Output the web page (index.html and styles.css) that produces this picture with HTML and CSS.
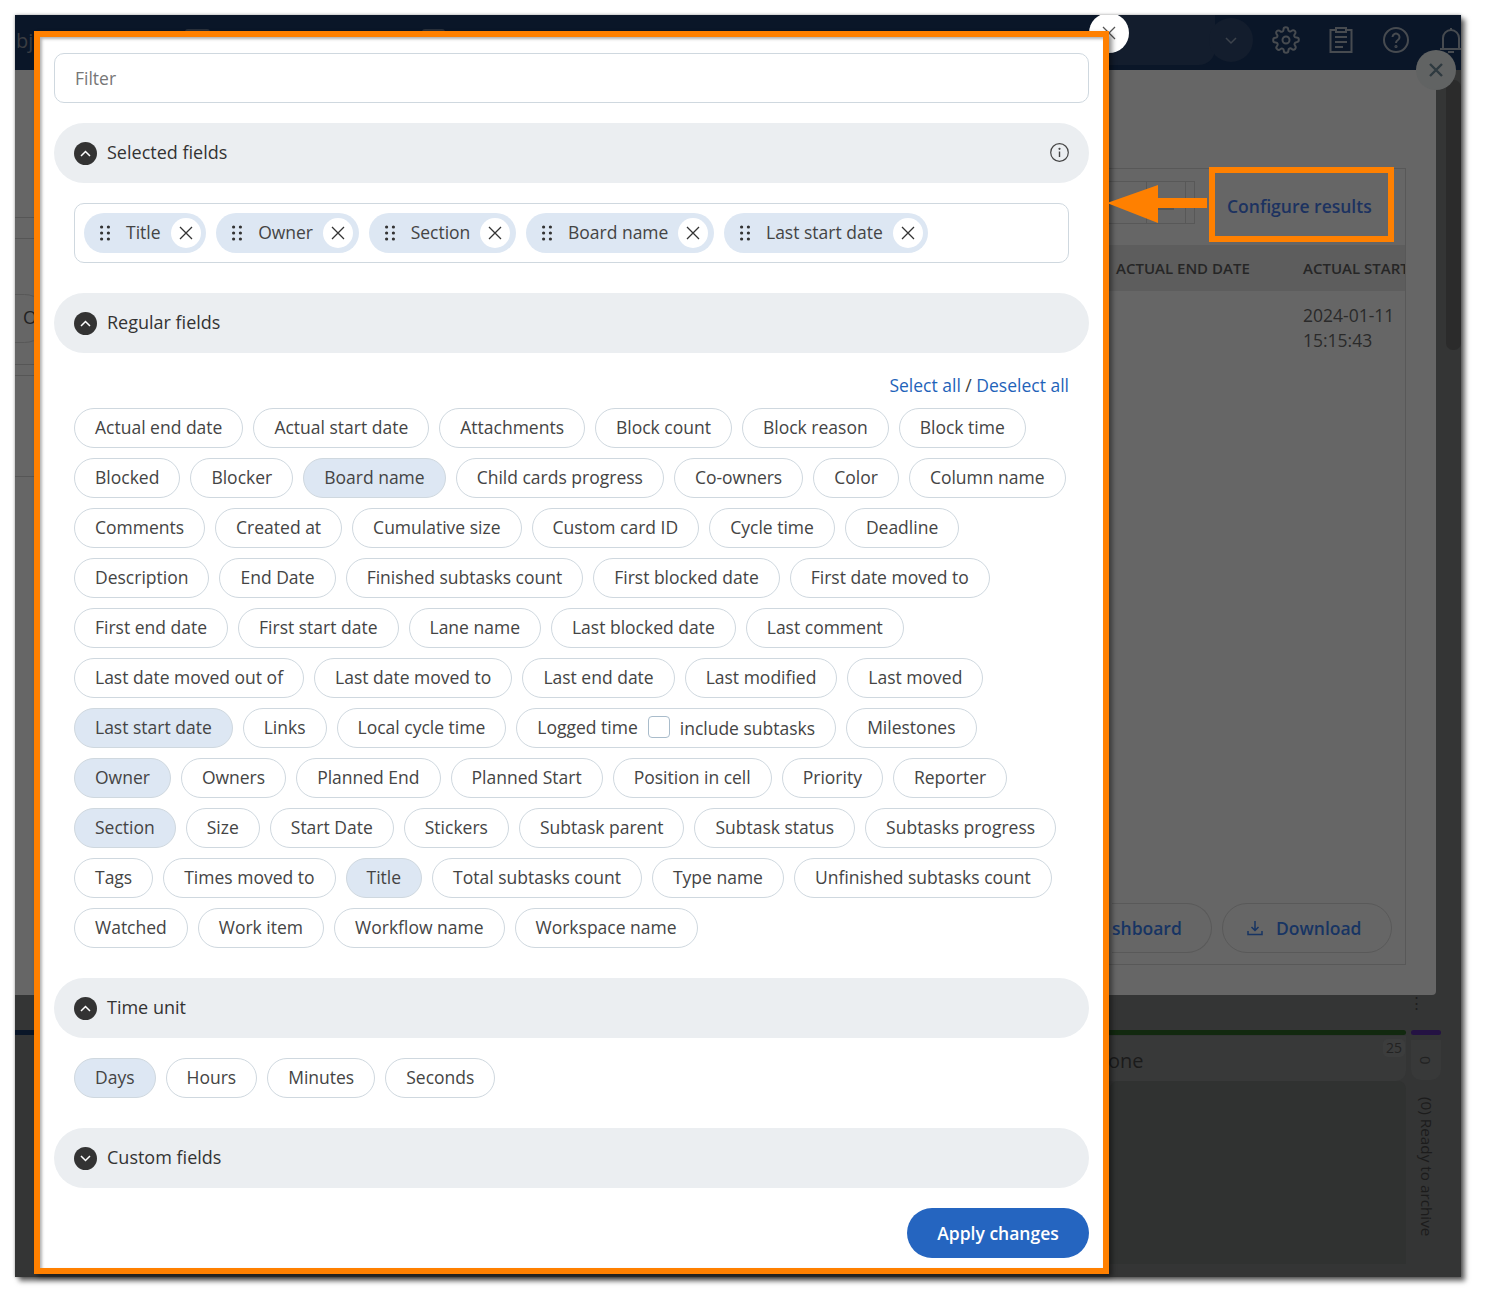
FILE: index.html
```html
<!DOCTYPE html>
<html lang="en">
<head>
<meta charset="utf-8">
<title>Configure results</title>
<link rel="stylesheet" href="styles.css">
</head>
<body>
<div class="screen">
  <div class="topbar">
    <span class="brand">bj</span>
    <span class="tab-lump lump-a"></span>
    <span class="tab-lump lump-b"></span>
    <span class="top-fade"></span>
    <span class="user-chip"><svg width="16" height="16" viewBox="0 0 16 16"><path d="M3 6l5 5 5-5" fill="none" stroke="#3d434c" stroke-width="1.5"/></svg></span>
    <svg class="top-icon gear" width="28" height="28" viewBox="0 0 24 24" fill="none" stroke="#474b50" stroke-width="1.7"><circle cx="12" cy="12" r="3"/><path d="M19.4 15a1.65 1.65 0 0 0 .33 1.82l.06.06a2 2 0 1 1-2.83 2.83l-.06-.06a1.65 1.65 0 0 0-2.82 1.17V21a2 2 0 1 1-4 0v-.09a1.65 1.65 0 0 0-2.82-1.12l-.06.06a2 2 0 1 1-2.83-2.83l.06-.06a1.65 1.65 0 0 0-1.17-2.82H3a2 2 0 1 1 0-4h.09a1.65 1.65 0 0 0 1.12-2.82l-.06-.06a2 2 0 1 1 2.83-2.83l.06.06a1.65 1.65 0 0 0 2.82-1.17V3a2 2 0 1 1 4 0v.09a1.65 1.65 0 0 0 2.82 1.12l.06-.06a2 2 0 1 1 2.83 2.83l-.06.06a1.65 1.65 0 0 0 1.17 2.82H21a2 2 0 1 1 0 4h-.09a1.65 1.65 0 0 0-1.51 1z"/></svg>
    <svg class="top-icon clip" width="26" height="28" viewBox="0 0 26 28" fill="none" stroke="#474b50" stroke-width="2"><path d="M8 4H2.5v22h21V4H18"/><path d="M8 2h10v4H8z"/><path d="M7 11h12M7 16h12M7 21h8"/></svg>
    <svg class="top-icon help" width="26" height="26" viewBox="0 0 26 26" fill="none" stroke="#474b50" stroke-width="2"><circle cx="13" cy="13" r="12"/><path d="M9.5 10a3.5 3.5 0 1 1 5.4 3c-1.2.8-1.9 1.400-1.900 3"/><circle cx="13" cy="19.500" r=".6"/></svg>
    <svg class="top-icon bell" width="24" height="28" viewBox="0 0 24 28" fill="none" stroke="#474b50" stroke-width="2"><path d="M4 21V11a8 8 0 0 1 16 0v10"/><path d="M1 22h22"/><path d="M12 3V1M9 25h6"/></svg>
  </div>

  <div class="panel">
    <div class="left-rule rule-1"></div>
    <div class="left-rule rule-2"></div>
    <div class="left-rule rule-3"></div>
    <div class="left-rule rule-4"></div>
    <div class="left-rule rule-5"></div>
    <div class="left-pill">O</div>
    <div class="results">
      <div class="pager"><span></span><span></span><i></i></div>
      <div class="configure">Configure results</div>
      <div class="thead"><span class="th-end">ACTUAL END DATE</span><span class="th-start">ACTUAL START</span></div>
      <div class="cell-date">2024-01-11<br>15:15:43</div>
      <div class="btn-download"><svg width="16" height="16" viewBox="0 0 16 16" fill="none" stroke="#173463" stroke-width="1.500"><path d="M8 1v9M4.500 7L8 10.500 11.500 7M1 11v3.500h14V11"/></svg>Download</div>
    </div>
    <div class="btn-dash"><span>shboard</span></div>
  </div>
  <div class="scroll-track"><span class="scroll-thumb"></span></div>
  <div class="close-outer"><svg width="16" height="16" viewBox="0 0 16 16"><path d="M2 2l12 12M14 2L2 14" stroke="#2f3a40" stroke-width="2.400"/></svg></div>

  <div class="board">
    <span class="kebab">⋮</span>
    <span class="bar-navy"></span>
    <span class="bar-green"></span>
    <span class="bar-purple"></span>
    <div class="col-head"><span class="col-name">one</span><span class="col-count">25</span></div>
    <div class="col-body"></div>
    <div class="mini-head">0</div>
    <div class="mini-body">(0) Ready to archive</div>
  </div>

  <div class="close-modal"><svg width="14" height="14" viewBox="0 0 14 14"><path d="M1 1l12 12M13 1L1 13" stroke="#555" stroke-width="1.300"/></svg></div>

  <div class="modal">
    <div class="filter">Filter</div>

    <div class="sec-head"><span class="chev"><svg width="11" height="7" viewBox="0 0 11 7"><path d="M1 6l4.500-4.500L10 6" fill="none" stroke="#fff" stroke-width="1.500"/></svg></span><span class="sec-title">Selected fields</span>
      <svg class="info" width="19" height="19" viewBox="0 0 19 19" fill="none" stroke="#444" stroke-width="1.200"><circle cx="9.500" cy="9.500" r="8.800"/><path d="M9.500 8.500v5.500" stroke-width="1.400"/><circle cx="9.500" cy="5.800" r=".5"/></svg>
    </div>
    <div class="selected-box">
      <div class="sel-chip"><svg class="dots" width="10" height="16" viewBox="0 0 10 16" fill="#333"><circle cx="1.600" cy="2" r="1.600"/><circle cx="8.400" cy="2" r="1.600"/><circle cx="1.600" cy="8" r="1.600"/><circle cx="8.400" cy="8" r="1.600"/><circle cx="1.600" cy="14" r="1.600"/><circle cx="8.400" cy="14" r="1.600"/></svg><span>Title</span><span class="sel-x"><svg width="14" height="14" viewBox="0 0 14 14"><path d="M1 1l12 12M13 1L1 13" stroke="#333" stroke-width="1.300"/></svg></span></div>
      <div class="sel-chip"><svg class="dots" width="10" height="16" viewBox="0 0 10 16" fill="#333"><circle cx="1.600" cy="2" r="1.600"/><circle cx="8.400" cy="2" r="1.600"/><circle cx="1.600" cy="8" r="1.600"/><circle cx="8.400" cy="8" r="1.600"/><circle cx="1.600" cy="14" r="1.600"/><circle cx="8.400" cy="14" r="1.600"/></svg><span>Owner</span><span class="sel-x"><svg width="14" height="14" viewBox="0 0 14 14"><path d="M1 1l12 12M13 1L1 13" stroke="#333" stroke-width="1.300"/></svg></span></div>
      <div class="sel-chip"><svg class="dots" width="10" height="16" viewBox="0 0 10 16" fill="#333"><circle cx="1.600" cy="2" r="1.600"/><circle cx="8.400" cy="2" r="1.600"/><circle cx="1.600" cy="8" r="1.600"/><circle cx="8.400" cy="8" r="1.600"/><circle cx="1.600" cy="14" r="1.600"/><circle cx="8.400" cy="14" r="1.600"/></svg><span>Section</span><span class="sel-x"><svg width="14" height="14" viewBox="0 0 14 14"><path d="M1 1l12 12M13 1L1 13" stroke="#333" stroke-width="1.300"/></svg></span></div>
      <div class="sel-chip"><svg class="dots" width="10" height="16" viewBox="0 0 10 16" fill="#333"><circle cx="1.600" cy="2" r="1.600"/><circle cx="8.400" cy="2" r="1.600"/><circle cx="1.600" cy="8" r="1.600"/><circle cx="8.400" cy="8" r="1.600"/><circle cx="1.600" cy="14" r="1.600"/><circle cx="8.400" cy="14" r="1.600"/></svg><span>Board name</span><span class="sel-x"><svg width="14" height="14" viewBox="0 0 14 14"><path d="M1 1l12 12M13 1L1 13" stroke="#333" stroke-width="1.300"/></svg></span></div>
      <div class="sel-chip"><svg class="dots" width="10" height="16" viewBox="0 0 10 16" fill="#333"><circle cx="1.600" cy="2" r="1.600"/><circle cx="8.400" cy="2" r="1.600"/><circle cx="1.600" cy="8" r="1.600"/><circle cx="8.400" cy="8" r="1.600"/><circle cx="1.600" cy="14" r="1.600"/><circle cx="8.400" cy="14" r="1.600"/></svg><span>Last start date</span><span class="sel-x"><svg width="14" height="14" viewBox="0 0 14 14"><path d="M1 1l12 12M13 1L1 13" stroke="#333" stroke-width="1.300"/></svg></span></div>
    </div>

    <div class="sec-head sec-regular"><span class="chev"><svg width="11" height="7" viewBox="0 0 11 7"><path d="M1 6l4.500-4.500L10 6" fill="none" stroke="#fff" stroke-width="1.500"/></svg></span><span class="sec-title">Regular fields</span></div>
    <div class="select-links"><a>Select all</a> / <a>Deselect all</a></div>
    <div class="chips">
      <span class="chip">Actual end date</span><span class="chip">Actual start date</span><span class="chip">Attachments</span><span class="chip">Block count</span><span class="chip">Block reason</span><span class="chip">Block time</span>
      <span class="chip">Blocked</span><span class="chip">Blocker</span><span class="chip on">Board name</span><span class="chip">Child cards progress</span><span class="chip">Co-owners</span><span class="chip">Color</span><span class="chip">Column name</span>
      <span class="chip">Comments</span><span class="chip">Created at</span><span class="chip">Cumulative size</span><span class="chip">Custom card ID</span><span class="chip">Cycle time</span><span class="chip">Deadline</span>
      <span class="chip">Description</span><span class="chip">End Date</span><span class="chip">Finished subtasks count</span><span class="chip">First blocked date</span><span class="chip">First date moved to</span>
      <span class="chip">First end date</span><span class="chip">First start date</span><span class="chip">Lane name</span><span class="chip">Last blocked date</span><span class="chip">Last comment</span>
      <span class="chip">Last date moved out of</span><span class="chip">Last date moved to</span><span class="chip">Last end date</span><span class="chip">Last modified</span><span class="chip">Last moved</span>
      <span class="chip on">Last start date</span><span class="chip">Links</span><span class="chip">Local cycle time</span><span class="chip">Logged time<span class="check"></span><span class="check-label">include subtasks</span></span><span class="chip">Milestones</span>
      <span class="chip on">Owner</span><span class="chip">Owners</span><span class="chip">Planned End</span><span class="chip">Planned Start</span><span class="chip">Position in cell</span><span class="chip">Priority</span><span class="chip">Reporter</span>
      <span class="chip on">Section</span><span class="chip">Size</span><span class="chip">Start Date</span><span class="chip">Stickers</span><span class="chip">Subtask parent</span><span class="chip">Subtask status</span><span class="chip">Subtasks progress</span>
      <span class="chip">Tags</span><span class="chip">Times moved to</span><span class="chip on">Title</span><span class="chip">Total subtasks count</span><span class="chip">Type name</span><span class="chip">Unfinished subtasks count</span>
      <span class="chip">Watched</span><span class="chip">Work item</span><span class="chip">Workflow name</span><span class="chip">Workspace name</span>
    </div>

    <div class="sec-head sec-time"><span class="chev"><svg width="11" height="7" viewBox="0 0 11 7"><path d="M1 6l4.500-4.500L10 6" fill="none" stroke="#fff" stroke-width="1.500"/></svg></span><span class="sec-title">Time unit</span></div>
    <div class="chips chips-time">
      <span class="chip on">Days</span><span class="chip">Hours</span><span class="chip">Minutes</span><span class="chip">Seconds</span>
    </div>

    <div class="sec-head sec-custom"><span class="chev"><svg width="11" height="7" viewBox="0 0 11 7"><path d="M1 1l4.500 4.500L10 1" fill="none" stroke="#fff" stroke-width="1.500"/></svg></span><span class="sec-title">Custom fields</span></div>
    <div class="actions"><span class="apply">Apply changes</span></div>
  </div>

  <div class="callout"></div>
  <svg class="arrow" width="101" height="38" viewBox="0 0 101 38"><path d="M0 18L51 0v13h49v10H51v15z" fill="#ff8000"/></svg>
</div>
</body>
</html>
```

FILE: styles.css
```css
* { box-sizing: border-box; }
html, body { margin: 0; padding: 0; background: #fff; }
body { width: 1487px; height: 1302px; padding: 15px 0 0 15px; font-family: "Open Sans", "Liberation Sans", sans-serif; font-size: 17.5px; color: #3c3c3c; overflow: hidden; }

.screen { position: relative; width: 1446px; height: 1262px; background: #343535; box-shadow: 4px 4px 5px rgba(0,0,0,.6), 0 0 3px rgba(0,0,0,.35); }

/* dimmed page behind the modal */
.topbar { position: absolute; left: 0; top: 0; width: 100%; height: 55px; background: #0a1628; overflow: hidden; }
.brand { position: absolute; left: 1px; top: 12px; font-size: 20px; color: #3a3d42; }
.tab-lump { position: absolute; top: 14px; height: 4px; background: #2a303a; border-radius: 3px 3px 0 0; }
.lump-a { left: 170px; width: 25px; }
.lump-b { left: 407px; width: 23px; }
.top-fade { position: absolute; left: 1090px; top: 0; width: 110px; height: 50px; background: #131d2d; border-radius: 0 0 16px 0; }
.user-chip { position: absolute; left: 1194px; top: 3px; width: 44px; height: 44px; border-radius: 50%; background: #131d2d; display: flex; align-items: center; justify-content: center; }
.top-icon { position: absolute; }
.gear { left: 1257px; top: 11px; }
.clip { left: 1313px; top: 11px; }
.help { left: 1368px; top: 12px; }
.bell { left: 1424px; top: 12px; }

.panel { position: absolute; left: 0; top: 55px; width: 1421px; height: 925px; background: #666; border-radius: 0 0 4px 0; }
.left-rule { position: absolute; left: 0; width: 30px; height: 1px; background: #565656; }
.rule-1 { top: 147px; } .rule-2 { top: 168px; } .rule-3 { top: 294px; } .rule-4 { top: 305px; } .rule-5 { top: 406px; }
.left-pill { position: absolute; left: -30px; top: 224px; width: 64px; height: 49px; border: 1px solid #585858; border-radius: 25px; clip-path: inset(0 0 0 30px); padding: 10px 0 0 37px; font-size: 18px; color: #222; }

.results { position: absolute; left: 1090px; top: 98px; width: 301px; height: 797px; border: 1px solid #585858; border-left: 0; overflow: hidden; }
.pager { position: absolute; left: 2px; top: 12px; width: 88px; height: 43px; border: 1px solid #585858; display: flex; }
.pager span { width: 39px; border-right: 1px solid #585858; }
.pager i { position: absolute; left: 50px; top: 25px; width: 16px; height: 3px; background: #555; }
.configure { position: absolute; left: 122px; top: 25px; font-weight: 600; color: #1c3260; white-space: nowrap; }
.thead { position: absolute; left: 0; top: 76px; width: 100%; height: 46px; background: #5d5d5d; font-size: 15px; font-weight: 600; color: #262626; }
.thead span { position: absolute; top: 13px; white-space: nowrap; }
.th-end { left: 11px; } .th-start { left: 198px; }
.cell-date { position: absolute; left: 198px; top: 134px; line-height: 25px; color: #2a2a2a; }
.btn-dash, .btn-download { height: 50px; border: 1px solid #595959; border-radius: 25px; display: flex; align-items: center; font-weight: 600; color: #173463; white-space: nowrap; }
.btn-download { position: absolute; top: 734px; left: 117px; width: 170px; padding-left: 24px; gap: 13px; }
.btn-dash { position: absolute; left: 1097px; top: 833px; width: 100px; padding-left: 0; border-left: 0; border-radius: 0 25px 25px 0; }

.scroll-track { position: absolute; left: 1421px; top: 55px; width: 25px; height: 940px; background: #343535; }
.scroll-thumb { position: absolute; left: 10px; top: 10px; width: 15px; height: 270px; background: #2b2b2b; border-radius: 7px; }
.close-outer { position: absolute; left: 1401px; top: 35px; width: 40px; height: 40px; border-radius: 50%; background: #616363; display: flex; align-items: center; justify-content: center; }

.board { position: absolute; left: 0; top: 980px; width: 100%; height: 282px; background: #343535; }
.kebab { position: absolute; left: 1394px; top: 0; font-size: 15px; color: #1e1e1e; line-height: 1; }
.bar-navy { position: absolute; left: 0; top: 35px; width: 30px; height: 5px; background: #0a1628; }
.bar-green { position: absolute; left: 1090px; top: 35px; width: 301px; height: 5px; border-radius: 3px; background: #12290f; }
.bar-purple { position: absolute; left: 1396px; top: 35px; width: 30px; height: 5px; border-radius: 3px; background: #241243; }
.col-head { position: absolute; left: 1090px; top: 41px; width: 301px; height: 45px; background: #383939; border-radius: 0 0 10px 0; }
.col-name { position: absolute; left: 3px; top: 11px; font-size: 20px; color: #1b1b1b; white-space: nowrap; }
.col-count { position: absolute; right: 1px; top: 3px; font-size: 14px; color: #222; line-height: 1.3; padding: 0 3px; background: #3c3d3d; border-radius: 5px; }
.col-body { position: absolute; left: 1095px; top: 86px; width: 296px; height: 183px; background: #303231; border-radius: 8px 8px 0 0; }
.mini-head { position: absolute; left: 1396px; top: 45px; width: 30px; height: 40px; background: #383939; border-radius: 0 0 10px 10px; font-size: 15px; color: #222; writing-mode: vertical-rl; display: flex; align-items: center; justify-content: center; }
.mini-body { position: absolute; left: 1397px; top: 102px; width: 30px; height: 170px; font-size: 15.300px; color: #1c1c1c; writing-mode: vertical-rl; line-height: 30px; white-space: nowrap; }

/* modal */
.close-modal { position: absolute; left: 1074px; top: -2px; width: 40px; height: 40px; background: #fff; border-radius: 50%; clip-path: inset(2px 0 0 0); display: flex; align-items: center; justify-content: center; }
.modal { position: absolute; left: 19px; top: 16px; width: 1075px; height: 1243px; background: #fff; border: 6px solid #ff8000; padding: 16px 14px 0; box-shadow: inset 2px 2px 3px rgba(0,0,0,.3), 3px 3px 5px rgba(0,0,0,.45); }
.filter { height: 50px; border: 1px solid #cfd8df; border-radius: 10px; padding: 0 20px; line-height: 48px; color: #767676; }
.sec-head { position: relative; height: 60px; margin-top: 20px; background: #ebeef1; border-radius: 30px; display: flex; align-items: center; padding-left: 20px; }
.sec-regular { margin-top: 30px; }
.sec-time { margin-top: 30px; }
.sec-custom { margin-top: 30px; }
.chev { width: 23px; height: 23px; border-radius: 50%; background: #333; display: flex; align-items: center; justify-content: center; }
.sec-title { margin-left: 10px; font-size: 18px; font-weight: 500; color: #333; position: relative; top: -1px; }
.info { position: absolute; right: 20px; top: 20px; }

.selected-box { height: 60px; margin: 20px 20px 0; border: 1px solid #cfd8df; border-radius: 10px; padding: 9px; display: flex; gap: 10px; }
.sel-chip { height: 40px; background: #dde7f3; border-radius: 20px; display: flex; align-items: center; padding: 0 5.600px 0 16px; white-space: nowrap; color: #444; }
.sel-chip > span:first-of-type { position: relative; top: -1px; }
.dots { margin-right: 16px; flex: none; }
.sel-x { width: 30px; height: 30px; margin-left: 10px; border-radius: 50%; background: #fff; display: flex; align-items: center; justify-content: center; }

.select-links { margin: 20px 20px 0; height: 25px; line-height: 25px; text-align: right; color: #3c3c3c; }
.select-links a { color: #1f63b9; }
.chips { display: flex; flex-wrap: wrap; gap: 10px; margin: 10px 20px 0; }
.chips-time { margin-top: 20px; }
.chip { height: 40px; padding: 0 20px 2px; border: 1px solid #cfd8df; border-radius: 20px; display: inline-flex; align-items: center; white-space: nowrap; color: #444; }
.chip.on { background: #dde7f3; }
.check { width: 22px; height: 22px; margin: 0 10px; border: 1px solid #a9bccb; border-radius: 4px; background: #fff; }
.check-label { position: relative; top: 1px; }
.actions { display: flex; justify-content: flex-end; margin-top: 20px; }
.apply { width: 182px; height: 50px; border-radius: 25px; background: #2565c0; color: #fff; font-weight: 600; display: flex; align-items: center; justify-content: center; }

/* annotation */
.callout { position: absolute; left: 1194px; top: 152px; width: 185px; height: 75px; border: 6px solid #ff8000; }
.arrow { position: absolute; left: 1092px; top: 170px; }
```
